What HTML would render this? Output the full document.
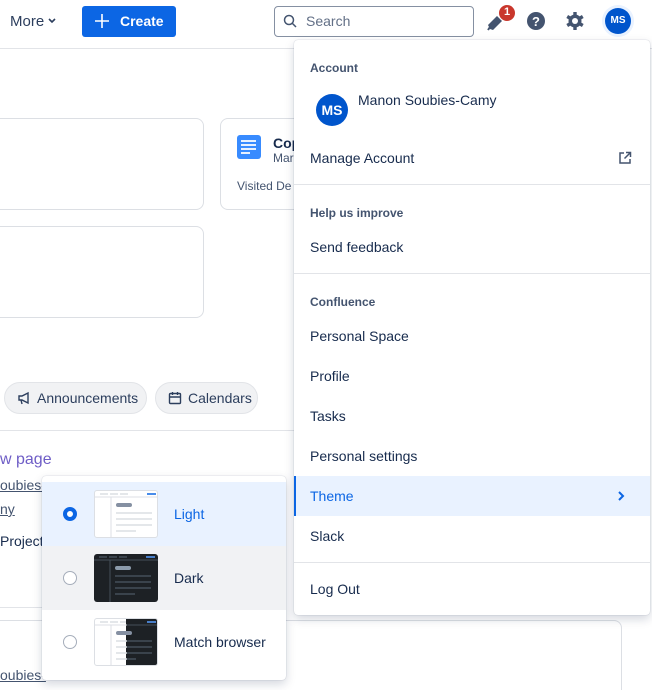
<!DOCTYPE html>
<html style="width:652px;height:690px;overflow:hidden"><head><meta charset="utf-8"><style>
*{box-sizing:border-box;margin:0;padding:0}
body{width:652px;height:690px;overflow:hidden;background:#fff;font-family:"Liberation Sans",sans-serif;color:#172b4d;position:relative;font-size:14px}
.abs{position:absolute}
.hdr{left:0;top:0;width:652px;height:49px;border-bottom:1px solid #e2e4e8}
.card{border:1px solid #dcdfe4;border-radius:8px;background:#fff}
.chip{border:1px solid #e2e4e8;background:#f1f2f4;border-radius:16px;height:32px;font-size:14px;display:flex;align-items:center;gap:6px;padding:0 12px;color:#2c3e5d}
.chip svg{flex-shrink:0}
.menu{left:294px;top:40px;width:356px;height:575px;background:#fff;border-radius:4px;box-shadow:0 4px 10px rgba(9,30,66,.18),0 0 1px rgba(9,30,66,.3)}
.it{position:absolute;left:0;width:356px;height:40px;line-height:40px;padding-left:16px;font-size:14px;color:#172b4d}
.sec{position:absolute;left:16px;font-size:12px;font-weight:bold;color:#44546f}
.div{position:absolute;left:0;width:356px;height:1px;background:#e2e4e8}
.sub{left:42px;top:476px;width:244px;height:204px;background:#fff;border-radius:4px;box-shadow:0 4px 10px rgba(9,30,66,.18),0 0 1px rgba(9,30,66,.3)}
.row{position:absolute;left:0;width:244px;height:64px}
.radio{position:absolute;left:21px;top:25px;width:14px;height:14px;border-radius:50%;border:1.5px solid #a5adba;background:#fff}
.thumb{position:absolute;left:52px;top:8px;width:64px;height:48px;border-radius:3px;overflow:hidden}
.lbl{position:absolute;left:132px;top:0;line-height:64px;font-size:14px}
</style></head><body>
<div class="abs hdr"></div>
<div class="abs" style="left:10px;top:13px;font-size:15px;color:#2c3e5d">More</div>
<svg class="abs" style="left:48px;top:18px" width="8" height="6"><path d="M1 1l3 3 3-3" stroke="#2c3e5d" stroke-width="1.6" fill="none"/></svg>
<div class="abs" style="left:82px;top:6px;width:94px;height:31px;background:#0c66e4;border-radius:3px;color:#fff;font-weight:bold;font-size:14px;line-height:31px;padding-left:38px">Create</div>
<svg class="abs" style="left:95px;top:14px" width="14" height="14"><path d="M7 0v14M0 7h14" stroke="#fff" stroke-width="1.6"/></svg>
<div class="abs" style="left:274px;top:6px;width:200px;height:31px;border:1px solid #8590a2;border-radius:4px;font-size:14px;color:#626f86;line-height:29px;padding-left:31px">Search</div>
<svg class="abs" style="left:283px;top:14px" width="14" height="14"><circle cx="6" cy="6" r="4.5" stroke="#44546f" stroke-width="1.5" fill="none"/><path d="M9.5 9.5l3.5 3.5" stroke="#44546f" stroke-width="1.5"/></svg>
<svg class="abs" style="left:486px;top:10px" width="22" height="22"><path d="M2 15l9-9 5 5-9 9-3-1z" fill="#44546f"/><path d="M4 17l-2 3" stroke="#44546f" stroke-width="2"/></svg>
<div class="abs" style="left:498px;top:4px;width:18px;height:18px;border-radius:50%;background:#c9372c;color:#fff;font-size:11px;font-weight:bold;text-align:center;line-height:15px;border:1.5px solid #fff">1</div>
<svg class="abs" style="left:526px;top:11px" width="20" height="20"><circle cx="10" cy="10" r="9" fill="#44546f"/><text x="10" y="15" text-anchor="middle" font-family="Liberation Sans" font-weight="bold" font-size="13" fill="#fff">?</text></svg>
<svg class="abs" style="left:565px;top:11px" width="20" height="20" viewBox="0 0 20 20"><g fill="#44546f"><circle cx="10" cy="10" r="6.5"/><g id="t"><rect x="8.3" y="1" width="3.4" height="4"/><rect x="8.3" y="15" width="3.4" height="4"/></g><use href="#t" transform="rotate(60 10 10)"/><use href="#t" transform="rotate(120 10 10)"/></g><circle cx="10" cy="10" r="3" fill="#fff"/></svg>
<div class="abs" style="left:602px;top:5px;width:32px;height:32px;border-radius:50%;background:#e9f2ff"></div>
<div class="abs" style="left:605px;top:8px;width:26px;height:26px;border-radius:50%;background:#0055cc;color:#fff;font-size:10px;font-weight:bold;text-align:center;line-height:26px">MS</div>

<div class="abs card" style="left:-10px;top:118px;width:214px;height:92px"></div>
<div class="abs card" style="left:-10px;top:226px;width:214px;height:92px"></div>
<div class="abs card" style="left:220px;top:118px;width:200px;height:92px;overflow:hidden">
 <div class="abs" style="left:16px;top:16px;width:24px;height:24px;background:#388bff;border-radius:3px"></div>
 <svg class="abs" style="left:20px;top:21px" width="16" height="14"><path d="M0 1h15M0 5h15M0 9h15M0 13h9" stroke="#fff" stroke-width="1.8"/></svg>
 <div class="abs" style="left:52px;top:16px;font-weight:bold;font-size:14px">Cop</div>
 <div class="abs" style="left:52px;top:32px;font-size:12px;color:#44546f">Mar</div>
 <div class="abs" style="left:16px;top:60px;font-size:12px;color:#44546f">Visited De</div>
</div>
<div class="abs chip" style="left:4px;top:382px;width:143px"><svg width="14" height="14"><path d="M2 5h3l6-3v10l-6-3H2zM4 9l1 4" stroke="#2c3e5d" stroke-width="1.4" fill="none"/></svg>Announcements</div>
<div class="abs chip" style="left:155px;top:382px;width:103px"><svg width="14" height="14"><rect x="1.5" y="2.5" width="11" height="10" rx="1" stroke="#2c3e5d" stroke-width="1.4" fill="none"/><path d="M1.5 6h11M4.5 1v3M9.5 1v3" stroke="#2c3e5d" stroke-width="1.4"/></svg>Calendars</div>
<div class="abs" style="left:0;top:430px;width:294px;height:1px;background:#e2e4e8"></div>
<div class="abs" style="left:0;top:451px;font-size:16px;color:#6e5dc6">w page</div>
<div class="abs" style="left:0;top:477px;font-size:14px;text-decoration:underline;color:#44546f">oubies-</div>
<div class="abs" style="left:0;top:501px;font-size:14px;text-decoration:underline;color:#44546f">ny</div>
<div class="abs" style="left:0;top:533px;font-size:14px">Project</div>
<div class="abs" style="left:0;top:607px;width:42px;height:1px;background:#e2e4e8"></div>
<div class="abs card" style="left:-10px;top:620px;width:632px;height:90px"></div>
<div class="abs" style="left:0;top:667px;font-size:14px;text-decoration:underline;color:#44546f">oubies-</div>

<div class="abs menu">
 <div class="sec" style="top:21px">Account</div>
 <div class="abs" style="left:22px;top:54px;width:32px;height:32px;border-radius:50%;background:#0055cc;color:#fff;font-weight:bold;font-size:14px;text-align:center;line-height:32px">MS</div>
 <div class="abs" style="left:64px;top:52px;font-size:14px">Manon Soubies-Camy</div>
 <div class="it" style="top:98px">Manage Account</div>
 <svg class="abs" style="left:324px;top:111px" width="14" height="14"><path d="M6 2H2v10h10V8M8 1.5h4.5V6M12.5 1.5L6.5 7.5" stroke="#44546f" stroke-width="1.5" fill="none"/></svg>
 <div class="div" style="top:144px"></div>
 <div class="sec" style="top:166px">Help us improve</div>
 <div class="it" style="top:187px">Send feedback</div>
 <div class="div" style="top:233px"></div>
 <div class="sec" style="top:255px">Confluence</div>
 <div class="it" style="top:276px">Personal Space</div>
 <div class="it" style="top:316px">Profile</div>
 <div class="it" style="top:356px">Tasks</div>
 <div class="it" style="top:396px">Personal settings</div>
 <div class="it" style="top:436px;background:#e9f2ff;color:#0c66e4;border-left:2px solid #0c66e4;padding-left:14px">Theme</div>
 <svg class="abs" style="left:323px;top:451px" width="8" height="10"><path d="M2 1l4 4-4 4" stroke="#0c66e4" stroke-width="2" fill="none"/></svg>
 <div class="it" style="top:476px">Slack</div>
 <div class="div" style="top:522px"></div>
 <div class="it" style="top:529px">Log Out</div>
</div>

<div class="abs sub">
 <div class="row" style="top:6px;background:#e9f2ff">
  <div class="radio" style="border:4px solid #0c66e4"></div>
  <div class="thumb" style="border:1px solid #dcdfe4;background:#fff">
   <svg width="64" height="48"><path d="M5 3h8M15 3h8M25 3h8" stroke="#dcdfe4" stroke-width="1.5"/><path d="M52 3h9" stroke="#0c66e4" stroke-width="1.5"/><path d="M0 6h64M16 6v42" stroke="#dcdfe4"/><rect x="21" y="12" width="16" height="4" rx="2" fill="#8590a2"/><path d="M21 22h36M21 28h36M21 34h36M21 40h20" stroke="#dcdfe4" stroke-width="1.5"/></svg>
  </div>
  <div class="lbl" style="color:#0c66e4">Light</div>
 </div>
 <div class="row" style="top:70px;background:#f1f2f4">
  <div class="radio"></div>
  <div class="thumb" style="background:#1d2125">
   <svg width="64" height="48"><path d="M5 3h8M15 3h8M25 3h8" stroke="#454f59" stroke-width="1.5"/><path d="M52 3h9" stroke="#579dff" stroke-width="1.5"/><path d="M0 6h64M16 6v42" stroke="#454f59"/><rect x="21" y="12" width="16" height="4" rx="2" fill="#8c9bab"/><path d="M21 22h36M21 28h36M21 34h36M21 40h20" stroke="#454f59" stroke-width="1.5"/></svg>
  </div>
  <div class="lbl">Dark</div>
 </div>
 <div class="row" style="top:134px">
  <div class="radio"></div>
  <div class="thumb" style="border:1px solid #dcdfe4;background:linear-gradient(90deg,#fff 50%,#1d2125 50%)">
   <svg width="64" height="48"><path d="M5 3h8M15 3h8M25 3h6" stroke="#dcdfe4" stroke-width="1.5"/><path d="M52 3h9" stroke="#579dff" stroke-width="1.5"/><path d="M0 6h32M16 6v42" stroke="#dcdfe4"/><path d="M32 6h32" stroke="#454f59"/><rect x="21" y="12" width="16" height="4" rx="2" fill="#8590a2"/><path d="M21 22h11M21 28h11M21 34h11M21 40h11" stroke="#dcdfe4" stroke-width="1.5"/><path d="M32 22h25M32 28h25M32 34h25M32 40h9" stroke="#454f59" stroke-width="1.5"/></svg>
  </div>
  <div class="lbl">Match browser</div>
 </div>
</div>
</body></html>
